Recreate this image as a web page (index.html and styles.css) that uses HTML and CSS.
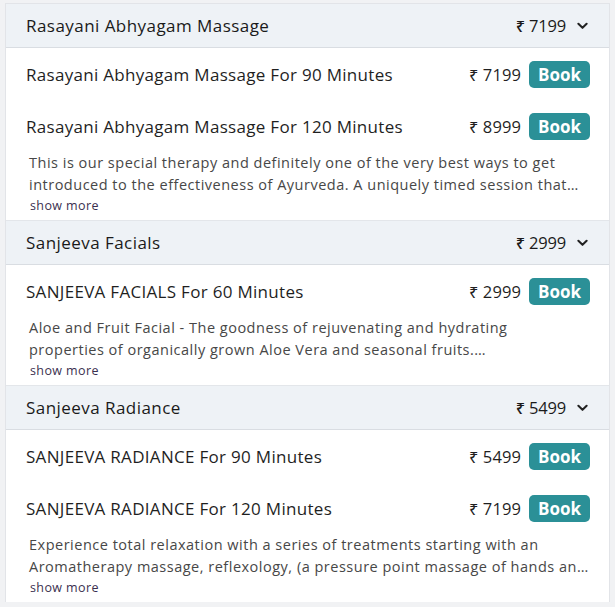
FILE: index.html
```html
<!DOCTYPE html>
<html>
<head>
<meta charset="utf-8">
<link rel="stylesheet" href="styles.css">
</head>
<body>
<div class="card">
  <section class="group">
    <div class="group-head">
      <span class="group-title">Rasayani Abhyagam Massage</span>
      <span class="group-price">₹ 7199 <svg class="chev" viewBox="0 0 12 8" width="11" height="8"><path d="M1.5 1.5 L6 6 L10.5 1.5" fill="none" stroke="#222" stroke-width="2.2" stroke-linecap="round" stroke-linejoin="round"/></svg></span>
    </div>
    <div class="item"><span class="item-name">Rasayani Abhyagam Massage For 90 Minutes</span><span class="item-price">₹ 7199</span><button class="book">Book</button></div>
    <div class="item"><span class="item-name">Rasayani Abhyagam Massage For 120 Minutes</span><span class="item-price">₹ 8999</span><button class="book">Book</button></div>
    <p class="desc">This is our special therapy and definitely one of the very best ways to get introduced to the effectiveness of Ayurveda. A uniquely timed session that…</p>
    <a class="more">show more</a>
  </section>
  <section class="group">
    <div class="group-head">
      <span class="group-title">Sanjeeva Facials</span>
      <span class="group-price">₹ 2999 <svg class="chev" viewBox="0 0 12 8" width="11" height="8"><path d="M1.5 1.5 L6 6 L10.5 1.5" fill="none" stroke="#222" stroke-width="2.2" stroke-linecap="round" stroke-linejoin="round"/></svg></span>
    </div>
    <div class="item"><span class="item-name">SANJEEVA FACIALS For 60 Minutes</span><span class="item-price">₹ 2999</span><button class="book">Book</button></div>
    <p class="desc">Aloe and Fruit Facial - The goodness of rejuvenating and hydrating<br>properties of organically grown Aloe Vera and seasonal fruits.…</p>
    <a class="more">show more</a>
  </section>
  <section class="group">
    <div class="group-head">
      <span class="group-title">Sanjeeva Radiance</span>
      <span class="group-price">₹ 5499 <svg class="chev" viewBox="0 0 12 8" width="11" height="8"><path d="M1.5 1.5 L6 6 L10.5 1.5" fill="none" stroke="#222" stroke-width="2.2" stroke-linecap="round" stroke-linejoin="round"/></svg></span>
    </div>
    <div class="item"><span class="item-name">SANJEEVA RADIANCE For 90 Minutes</span><span class="item-price">₹ 5499</span><button class="book">Book</button></div>
    <div class="item"><span class="item-name">SANJEEVA RADIANCE For 120 Minutes</span><span class="item-price">₹ 7199</span><button class="book">Book</button></div>
    <p class="desc">Experience total relaxation with a series of treatments starting with an Aromatherapy massage, reflexology, (a pressure point massage of hands an…</p>
    <a class="more">show more</a>
  </section>
</div>
</body>
</html>
```
FILE: styles.css
```css
* { box-sizing: border-box; }
html, body { margin: 0; padding: 0; }
body {
  background: #f1f2f4;
  padding: 3px 5px 0 5px;
  font-family: "Open Sans", "Noto Sans", sans-serif;
  color: #1d1d1f;
}
.card {
  width: 605px;
  background: #fff;
  border: 1px solid #e2e4e8;
  border-bottom: none;
}
.group-head {
  display: flex;
  align-items: center;
  justify-content: space-between;
  height: 45px;
  padding: 0 21px 0 20px;
  background: #eef2f6;
  border-bottom: 1px solid #d9dde2;
  border-top: 1px solid #e3e6ea;
}
.group:first-child .group-head { border-top: none; height: 44px; }
.group-title {
  font-size: 17px;
  font-weight: 500;
  letter-spacing: 0.45px;
  color: #1a1a1a;
}
.group-price {
  display: flex;
  align-items: center;
  gap: 11px;
  font-size: 16.5px;
  font-weight: 500;
  letter-spacing: -0.2px;
  color: #1a1a1a;
}
.chev { display: block; }
.item {
  display: flex;
  align-items: center;
  height: 52px;
  padding: 0 19px 0 20px;
}
.item-name {
  flex: 1;
  font-size: 17px;
  letter-spacing: 0.3px;
  color: #1f1f1f;
}
.item-price {
  font-size: 16.5px;
  color: #1f1f1f;
  margin-right: 8px;
  letter-spacing: 0.1px;
}
.book {
  width: 61px;
  height: 27px;
  border: none;
  border-radius: 5px;
  background: #2b9097;
  color: #fff;
  font-family: inherit;
  font-size: 17px;
  font-weight: 700;
  padding: 0;
}
.desc {
  margin: 0;
  padding: 0 18px 0 23px;
  font-size: 14.5px;
  line-height: 22px;
  letter-spacing: 0.5px;
  color: #474747;
}
.more {
  display: block;
  padding: 1px 0 5px 24px;
  font-size: 12.5px;
  line-height: 18px;
  letter-spacing: 0.4px;
  color: #3b2f4f;
}
```
